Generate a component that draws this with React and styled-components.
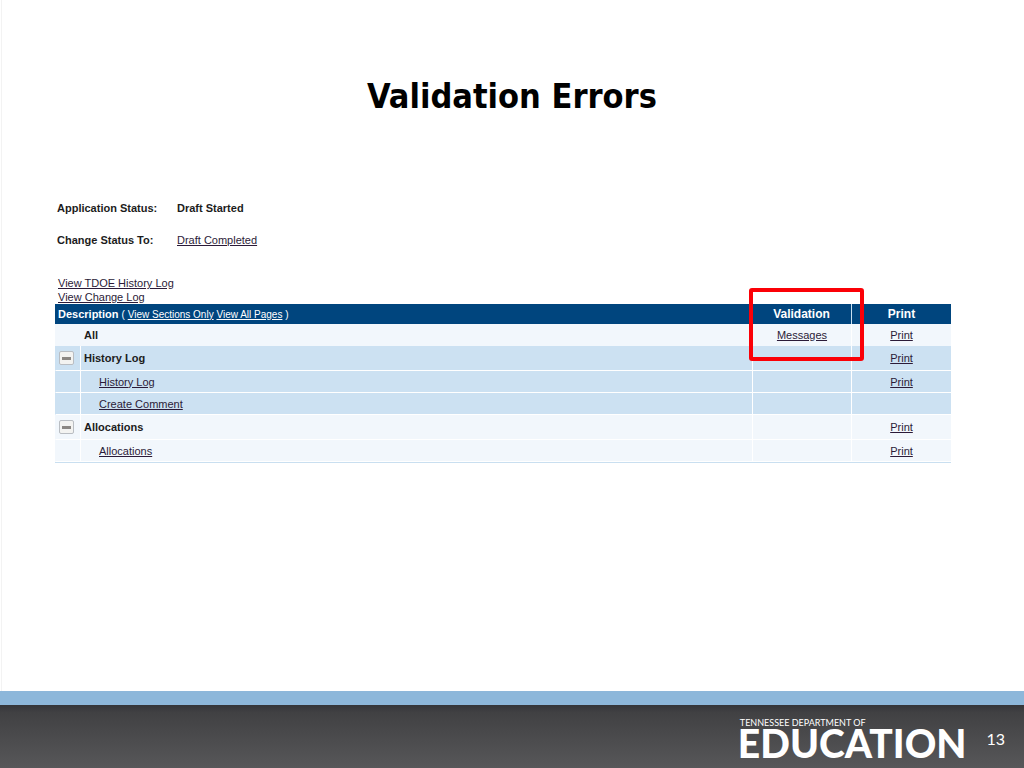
import React from "react";
import styled, { createGlobalStyle } from "styled-components";

const GlobalStyle = createGlobalStyle`
  * {
    box-sizing: border-box;
  }
  body {
    margin: 0;
    background: #ffffff;
    color: #1c1c1c;
    font-family: "Liberation Sans", Arial, sans-serif;
    font-size: 11px;
    line-height: 14px;
  }
`;

const Slide = styled.div`
  min-height: 100vh;
  display: flex;
  flex-direction: column;
`;

const Content = styled.main`
  flex: 1;
  margin-left: 1px;
  padding: 72px 73px 40px 53px;
  border-left: 1px solid #f3f3f3;
`;

const Title = styled.h1`
  margin: 0 0 78px;
  padding-left: 18px;
  color: #000000;
  font-family: "DejaVu Sans Condensed", Tahoma, sans-serif;
  font-size: 34px;
  line-height: 48px;
  font-weight: 700;
  text-align: center;
`;

const StatusList = styled.dl`
  display: grid;
  grid-template-columns: 120px 1fr;
  row-gap: 16px;
  margin: 0 0 28px;
  padding: 2px 0 0 2px;
  line-height: 16px;
`;

const StatusLabel = styled.dt`
  font-weight: 700;
`;

const StatusValue = styled.dd`
  margin: 0;
  font-weight: ${({ $bold }) => ($bold ? 700 : 400)};
`;

const Link = styled.a`
  color: ${({ $light }) => ($light ? "#ffffff" : "#2b1b38")};
  text-decoration: underline;
`;

const LogLinks = styled.nav`
  display: flex;
  flex-direction: column;
  align-items: flex-start;
  padding-left: 3px;
`;

const Table = styled.table`
  width: 100%;
  table-layout: fixed;
  border-collapse: separate;
  border-spacing: 0;
  border-bottom: 1px solid #c9dff0;
`;

const Col = styled.col`
  width: ${({ $width }) => ($width ? `${$width}px` : "auto")};
`;

const HeadCell = styled.th`
  position: relative;
  height: 20px;
  padding: 0 0 0 ${({ $center }) => ($center ? 0 : 3)}px;
  background: #00457e;
  color: #ffffff;
  font-size: ${({ $center }) => ($center ? 12 : 11)}px;
  text-align: ${({ $center }) => ($center ? "center" : "left")};
  border-left: ${({ $divided }) => ($divided ? "1px solid #c9dff0" : "0")};
`;

const ViewOptions = styled.span`
  font-size: 10px;
  font-weight: 400;
`;

const Row = styled.tr`
  height: ${({ $tall }) => ($tall ? 25 : 22)}px;
  background: ${({ $shaded }) => ($shaded ? "#cce1f2" : "#f2f7fc")};
`;

const Cell = styled.td`
  padding: 0 0 0 ${({ $indent }) => ($indent ? 18 : 3)}px;
  border-bottom: 1px solid ${({ $plain }) => ($plain ? "transparent" : "#ffffff")};
  border-left: 1px solid ${({ $divided }) => ($divided ? "#ffffff" : "transparent")};
  font-weight: ${({ $bold }) => ($bold ? 700 : 400)};
`;

const ToggleCell = styled(Cell)`
  padding: 0 0 0 3px;
`;

const LinkCell = styled(Cell)`
  padding: 0;
  text-align: center;
`;

const Toggle = styled.button`
  display: flex;
  align-items: center;
  justify-content: center;
  width: 15px;
  height: 14px;
  padding: 0;
  background: #f3f3f1;
  border: 1px solid #b9bdc2;
  border-radius: 2px;
  cursor: pointer;
  &::before {
    content: "";
    width: 9px;
    height: 3px;
    background: #8b8783;
  }
`;

const Highlight = styled.span`
  position: absolute;
  z-index: 1;
  top: -16px;
  left: -3px;
  right: -13px;
  height: 73px;
  border: 4px solid #fb0007;
  border-radius: 3px;
  pointer-events: none;
`;

const Footer = styled.footer`
  display: flex;
  align-items: flex-start;
  justify-content: flex-end;
  gap: 20px;
  height: 77px;
  padding: 13px 19px 0 0;
  border-top: 14px solid #8db7da;
  background: linear-gradient(#343539, #414143 12%, #575759);
  color: #ffffff;
`;

const Logo = styled.div`
  display: flex;
  flex-direction: column;
  font-family: Lato, sans-serif;
`;

const LogoTop = styled.span`
  padding-left: 2px;
  font-size: 9px;
  line-height: 10px;
`;

const LogoName = styled.span`
  font-size: 39px;
  line-height: 30px;
  font-weight: 900;
`;

const PageNumber = styled.span`
  padding-top: 11px;
  font-family: Lato, sans-serif;
  font-size: 16px;
  line-height: 20px;
`;

const rows = [
  { label: "All", heading: true, messages: true, print: true },
  { label: "History Log", heading: true, toggle: true, shaded: true, tall: true, print: true },
  { label: "History Log", shaded: true, print: true },
  { label: "Create Comment", shaded: true },
  { label: "Allocations", heading: true, toggle: true, tall: true, print: true },
  { label: "Allocations", print: true },
];

const SectionRow = ({ row }) => (
  <Row $shaded={row.shaded} $tall={row.tall}>
    <ToggleCell $plain={row.messages}>
      {row.toggle && <Toggle type="button" aria-label={`Collapse ${row.label}`} />}
    </ToggleCell>
    <Cell
      $plain={row.messages}
      $divided={!row.messages}
      $bold={row.heading}
      $indent={!row.heading}
    >
      {row.heading ? row.label : <Link href="#">{row.label}</Link>}
    </Cell>
    <LinkCell $plain={row.messages} $divided>
      {row.messages && <Link href="#">Messages</Link>}
    </LinkCell>
    <LinkCell $plain={row.messages} $divided>
      {row.print && <Link href="#">Print</Link>}
    </LinkCell>
  </Row>
);

const App = () => {
  return (
    <Slide>
      <GlobalStyle />
      <Content>
        <Title>Validation Errors</Title>
        <StatusList>
          <StatusLabel>Application Status:</StatusLabel>
          <StatusValue $bold>Draft Started</StatusValue>
          <StatusLabel>Change Status To:</StatusLabel>
          <StatusValue>
            <Link href="#">Draft Completed</Link>
          </StatusValue>
        </StatusList>
        <LogLinks>
          <Link href="#">View TDOE History Log</Link>
          <Link href="#">View Change Log</Link>
        </LogLinks>
        <Table>
          <colgroup>
            <Col $width={25} />
            <Col />
            <Col $width={99} />
            <Col $width={100} />
          </colgroup>
          <thead>
            <tr>
              <HeadCell colSpan={2}>
                Description{" "}
                <ViewOptions>
                  ( <Link href="#" $light>View Sections Only</Link>{" "}
                  <Link href="#" $light>View All Pages</Link> )
                </ViewOptions>
              </HeadCell>
              <HeadCell $center>
                Validation
                <Highlight />
              </HeadCell>
              <HeadCell $center $divided>Print</HeadCell>
            </tr>
          </thead>
          <tbody>
            {rows.map((row, index) => (
              <SectionRow key={index} row={row} />
            ))}
          </tbody>
        </Table>
      </Content>
      <Footer>
        <Logo>
          <LogoTop>TENNESSEE DEPARTMENT OF</LogoTop>
          <LogoName>EDUCATION</LogoName>
        </Logo>
        <PageNumber>13</PageNumber>
      </Footer>
    </Slide>
  );
};

export default App;
